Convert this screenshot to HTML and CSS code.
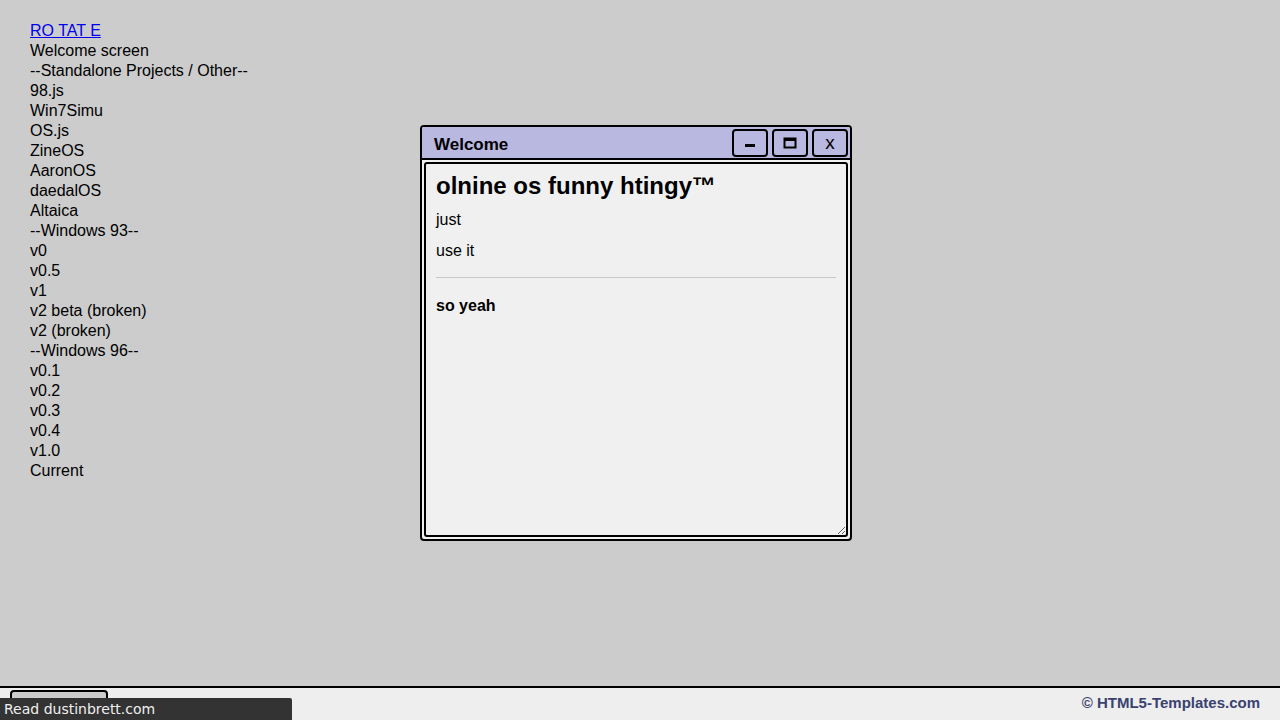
FILE: index.html
```html
<!DOCTYPE html>
<html lang="en">

<head>
    <meta charset="UTF-8">
    <meta name="viewport" content="width=device-width, initial-scale=1.0">
    <title>olnine os</title>
    <link rel="stylesheet" href="styles.css">
</head>

<body>
    <div class="desktop">
        <ul class="menu">
            <li><a href="#">RO TAT E</a></li>
            <li>Welcome screen</li>
            <li>--Standalone Projects / Other--</li>
            <li>98.js</li>
            <li>Win7Simu</li>
            <li>OS.js</li>
            <li>ZineOS</li>
            <li>AaronOS</li>
            <li>daedalOS</li>
            <li>Altaica</li>
            <li>--Windows 93--</li>
            <li>v0</li>
            <li>v0.5</li>
            <li>v1</li>
            <li>v2 beta (broken)</li>
            <li>v2 (broken)</li>
            <li>--Windows 96--</li>
            <li>v0.1</li>
            <li>v0.2</li>
            <li>v0.3</li>
            <li>v0.4</li>
            <li>v1.0</li>
            <li>Current</li>
        </ul>

        <div class="window">
            <div class="title_bar">
                <span class="title">Welcome</span>
                <div class="controls">
                    <button class="ctrl" aria-label="minimize">
                        <svg width="12" height="10" viewBox="0 0 12 10"><rect x="1" y="6" width="10" height="3" fill="#000"/></svg>
                    </button>
                    <button class="ctrl" aria-label="maximize">
                        <svg width="14" height="12" viewBox="0 0 14 12"><rect x="1.5" y="1.5" width="11" height="9" fill="none" stroke="#000" stroke-width="2"/><rect x="1" y="1" width="12" height="3" fill="#000"/></svg>
                    </button>
                    <button class="ctrl close" aria-label="close">x</button>
                </div>
            </div>
            <div class="window_body">
                <h1>olnine os funny htingy™</h1>
                <p class="first">just</p>
                <p>use it</p>
                <hr>
                <p class="strong">so yeah</p>
            </div>
        </div>
    </div>

    <div class="taskbar">
        <div class="task_button"></div>
        <span class="credit">© HTML5-Templates.com</span>
    </div>
    <div class="status">Read dustinbrett.com</div>
</body>

</html>
```

FILE: styles.css
```css
html,
body {
    margin: 0;
    height: 100%;
}

body {
    font-family: "Liberation Sans", Arial, sans-serif;
    background-color: #cccccc;
    color: #000;
    display: flex;
    flex-direction: column;
    overflow: hidden;
}

.desktop {
    flex: 1;
    position: relative;
}

.menu {
    list-style: none;
    margin: 0;
    padding: 21px 0 0 30px;
    font-size: 16px;
    line-height: 20px;
}

.menu a {
    color: #0000ee;
}

.window {
    position: absolute;
    left: 420px;
    top: 125px;
    width: 428px;
    height: 412px;
    border: 2px solid #000;
    border-radius: 4px;
    background-color: #f0f0f0;
    display: flex;
    flex-direction: column;
}

.title_bar {
    display: flex;
    align-items: center;
    justify-content: space-between;
    height: 31px;
    padding: 0 2px 0 12px;
    background-color: #b8b8e0;
    border-bottom: 2px solid #000;
    border-radius: 2px 2px 0 0;
}

.title {
    padding-top: 5px;
    font-weight: bold;
    font-size: 17px;
}

.controls {
    display: flex;
    gap: 4px;
    padding-top: 1px;
}

.ctrl {
    width: 36px;
    height: 28px;
    padding: 0;
    border: 2px solid #000;
    border-radius: 4px;
    background-color: #b8b8e0;
    display: flex;
    align-items: center;
    justify-content: center;
    font-family: "Liberation Sans", Arial, sans-serif;
    font-size: 19px;
    color: #000;
}

.window_body {
    flex: 1;
    margin: 2px;
    border: 2px solid #000;
    border-radius: 3px;
    padding: 8px 10px;
    resize: both;
    overflow: auto;
}

h1 {
    margin: 0;
    font-size: 24px;
    line-height: 28px;
}

p {
    margin: 0 0 13px;
    font-size: 16px;
    line-height: 18px;
}

p.first {
    margin-top: 11px;
}

hr {
    margin: 17px 0 19px;
    border: none;
    border-top: 1px solid #c8c8c8;
}

.strong {
    font-weight: bold;
}

.taskbar {
    height: 32px;
    border-top: 2px solid #000;
    background-color: #eeeeee;
    display: flex;
    justify-content: space-between;
    align-items: flex-start;
    padding: 0 20px 0 10px;
}

.task_button {
    margin-top: 2px;
    width: 94px;
    height: 34px;
    border: 2px solid #000;
    border-radius: 4px;
    background-color: #cccccc;
}

.credit {
    margin-top: 6px;
    font-weight: bold;
    font-size: 15px;
    color: #3a4270;
}

.status {
    position: absolute;
    left: 0;
    bottom: 0;
    width: 288px;
    height: 22px;
    padding-left: 4px;
    background-color: #333333;
    color: #f0f0f0;
    font-family: "DejaVu Sans", sans-serif;
    font-size: 14px;
    line-height: 22px;
    border-top-right-radius: 2px;
}
```
